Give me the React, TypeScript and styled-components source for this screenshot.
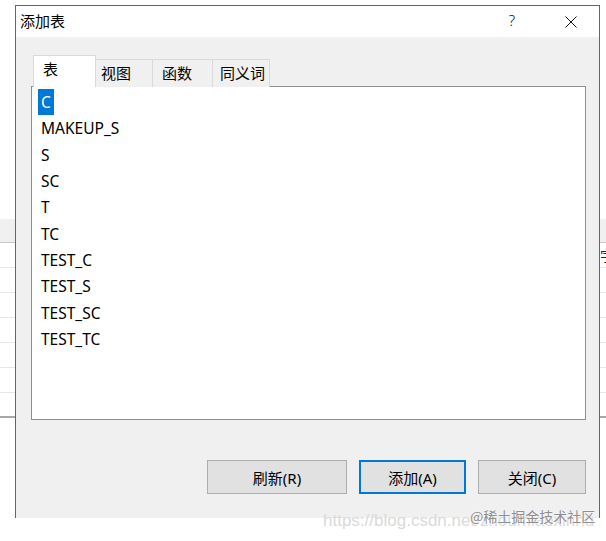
import React from "react";
import styled, { createGlobalStyle, css } from "styled-components";

const Global = createGlobalStyle`
  html, body { margin: 0; padding: 0; background: #ffffff; }
  body { font-family: "Noto Sans", "Noto Sans CJK SC", sans-serif; }
  * { box-sizing: border-box; }
`;

const FONT = `"Noto Sans", "Noto Sans CJK SC", sans-serif`;

const Desktop = styled.div`
  position: relative;
  width: 606px;
  height: 541px;
  overflow: hidden;
  background: #ffffff;
`;

/* ---------- background application (behind the dialog) ---------- */
const BgApp = styled.div`
  display: flex;
  flex-direction: column;
  padding-top: 219px;
`;

const BgHeader = styled.div`
  height: 24px;
  background: #f0f0f0;
  border-bottom: 1px solid #c8c8c8;
`;

const BgRow = styled.div<{ $last?: boolean }>`
  height: 25px;
  display: flex;
  align-items: center;
  padding-left: 600px;
  font-family: ${FONT};
  font-size: 14px;
  color: #222;
  border-bottom: ${(p) => (p.$last ? "2px solid #a8a8a8" : "1px solid #e6e6e6")};
`;

/* ---------- dialog window ---------- */
const Dialog = styled.div`
  position: absolute;
  left: 15px;
  top: 5px;
  width: 585px;
  height: 513px;
  display: flex;
  flex-direction: column;
  border: 1px solid #4d6a86;
  border-bottom: none;
  font-family: ${FONT};
`;

const TitleBar = styled.div`
  height: 31px;
  flex: none;
  display: flex;
  align-items: center;
  background: #ffffff;
  padding-left: 4px;
`;

const Title = styled.div`
  flex: 1;
  font-size: 15px;
  color: #000;
  padding-bottom: 3px;
`;

const HelpButton = styled.div`
  width: 30px;
  text-align: center;
  font-size: 15px;
  font-weight: 300;
  color: #111;
  margin-right: 34px;
  padding-bottom: 3px;
`;

const CloseButton = styled.div`
  width: 20px;
  height: 20px;
  display: flex;
  align-items: center;
  justify-content: center;
  margin-right: 18px;
`;

const Body = styled.div`
  flex: 1;
  display: flex;
  flex-direction: column;
  background: #f0f0f0;
  padding: 19px 13px 0 15px;
`;

const TabStrip = styled.div`
  display: flex;
  align-items: flex-end;
  height: 31px;
  padding-left: 2px;
  position: relative;
  z-index: 1;
  margin-bottom: -1px;
`;

const Tab = styled.div<{ $active?: boolean; $w: number; $pl: number }>`
  width: ${(p) => p.$w}px;
  padding-left: ${(p) => p.$pl}px;
  font-size: 15px;
  color: #000;
  display: flex;
  align-items: center;
  border: 1px solid #d9d9d9;
  border-bottom: none;
  ${(p) =>
    p.$active
      ? css`
          height: 32px;
          background: #ffffff;
          padding-bottom: 7px;
        `
      : css`
          height: 28px;
          background: #f0f0f0;
          border-left: none;
          padding-bottom: 2px;
        `}
`;

const ListBox = styled.div`
  height: 334px;
  background: #ffffff;
  border: 1px solid #8e8e8e;
  padding: 2px 6px;
  display: flex;
  flex-direction: column;
  align-items: flex-start;
`;

const ListItem = styled.div<{ $selected?: boolean }>`
  height: 26.33px;
  line-height: 26px;
  padding: 0 3px;
  font-size: 15.5px;
  color: ${(p) => (p.$selected ? "#ffffff" : "#000000")};
  background: ${(p) => (p.$selected ? "#0078d7" : "transparent")};
`;

const ButtonRow = styled.div`
  display: flex;
  justify-content: flex-end;
  gap: 12px;
  margin-top: 40px;
`;

const Button = styled.div<{ $w: number; $default?: boolean }>`
  width: ${(p) => p.$w}px;
  height: 34px;
  display: flex;
  align-items: center;
  justify-content: center;
  background: #e1e1e1;
  font-size: 15px;
  color: #000;
  border: ${(p) => (p.$default ? "2px solid #0078d7" : "1px solid #adadad")};
`;

/* ---------- watermarks (overlaying) ---------- */
const CsdnMark = styled.div`
  position: absolute;
  left: 323px;
  top: 511px;
  white-space: nowrap;
  font-family: "Liberation Sans", Arial, sans-serif;
  font-size: 17px;
  color: #dadada;
`;

const JuejinMark = styled.div`
  position: absolute;
  left: 470px;
  top: 506px;
  white-space: nowrap;
  font-family: "Noto Sans CJK SC", sans-serif;
  font-size: 14px;
  color: #8f8f8f;
  text-shadow: 0 0 2px #ffffff;
`;

const items = [
  "C",
  "MAKEUP_S",
  "S",
  "SC",
  "T",
  "TC",
  "TEST_C",
  "TEST_S",
  "TEST_SC",
  "TEST_TC",
];

const tabs = [
  { label: "表", w: 63, pl: 9, active: true },
  { label: "视图", w: 57, pl: 5 },
  { label: "函数", w: 60, pl: 9 },
  { label: "同义词", w: 57, pl: 7 },
];

export default function App() {
  return (
    <Desktop>
      <Global />
      <BgApp>
        <BgHeader />
        <BgRow>字</BgRow>
        <BgRow />
        <BgRow />
        <BgRow />
        <BgRow />
        <BgRow />
        <BgRow $last />
      </BgApp>

      <Dialog>
        <TitleBar>
          <Title>添加表</Title>
          <HelpButton>?</HelpButton>
          <CloseButton>
            <svg width="12" height="12" viewBox="0 0 12 12">
              <path d="M0.5 0.5 L11.5 11.5 M11.5 0.5 L0.5 11.5" stroke="#111" strokeWidth="1" fill="none" />
            </svg>
          </CloseButton>
        </TitleBar>
        <Body>
          <TabStrip>
            {tabs.map((t) => (
              <Tab key={t.label} $active={t.active} $w={t.w} $pl={t.pl}>
                {t.label}
              </Tab>
            ))}
          </TabStrip>
          <ListBox>
            {items.map((it, i) => (
              <ListItem key={it} $selected={i === 0}>
                {it}
              </ListItem>
            ))}
          </ListBox>
          <ButtonRow>
            <Button $w={140}>刷新(R)</Button>
            <Button $w={107} $default>
              添加(A)
            </Button>
            <Button $w={108}>关闭(C)</Button>
          </ButtonRow>
        </Body>
      </Dialog>

      <CsdnMark>https://blog.csdn.net/zhoumiaoxinhu</CsdnMark>
      <JuejinMark>@稀土掘金技术社区</JuejinMark>
    </Desktop>
  );
}
